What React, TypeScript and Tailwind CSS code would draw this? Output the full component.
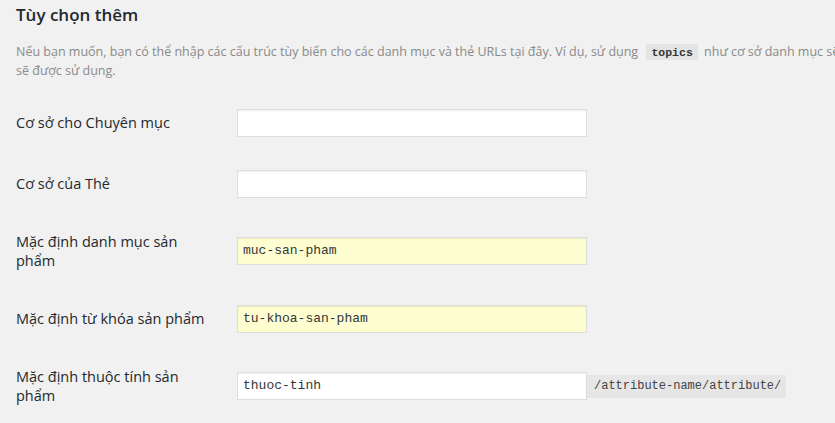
import React from "react";

const mono = { fontFamily: '"Liberation Mono", "DejaVu Sans Mono", monospace' };

function Row({
  label,
  value,
  tall,
  yellow,
  suffix,
}: {
  label: string;
  value?: string;
  tall?: boolean;
  yellow?: boolean;
  suffix?: string;
}) {
  return (
    <div className={`flex items-center ${tall ? "h-[74px]" : "h-[61px]"}`}>
      <div className="w-[195px] mr-[26px] text-[14.5px] leading-[19px] text-[#23282d]">{label}</div>
      <div
        className={`w-[350px] h-[28px] border border-[#dddddd] shadow-[inset_0_1px_2px_rgba(0,0,0,0.07)] flex items-center pl-[5px] text-[13px] text-[#32373c] ${
          yellow ? "bg-[#fefed0]" : "bg-white"
        }`}
        style={mono}
      >
        {value}
      </div>
      {suffix && (
        <div
          className="h-[23px] flex items-center bg-[#e6e6e6] pl-[7px] pr-[5px] text-[12px] text-[#444]"
          style={mono}
        >
          {suffix}
        </div>
      )}
    </div>
  );
}

export default function App() {
  return (
    <div
      className="w-[835px] h-[423px] overflow-hidden bg-[#f1f1f1] pl-4"
      style={{ fontFamily: '"Open Sans", "Noto Sans", sans-serif' }}
    >
      <h2 className="pt-[3px] text-[17px] leading-[23px] font-semibold text-[#23282d]">Tùy chọn thêm</h2>
      <div className="mt-[16px] text-[12.5px] text-[#8a8a8a]">
        <div className="h-[19px] leading-[19px] whitespace-nowrap">
          Nếu bạn muốn, bạn có thể nhập các cấu trúc tùy biến cho các danh mục và thẻ URLs tại đây. Ví dụ, sử dụng{" "}
          <code
            className="ml-[5px] mr-[3px] bg-[#e4e4e4] px-[5px] pt-[2px] pb-[1px] text-[11.5px] leading-[14px] font-bold text-[#333]"
            style={mono}
          >
            topics
          </code>{" "}
          như cơ sở danh mục sẽ
        </div>
        <div className="h-[19px] leading-[19px]">sẽ được sử dụng.</div>
      </div>
      <div className="mt-[12px]">
        <Row label="Cơ sở cho Chuyên mục" />
        <Row label="Cơ sở của Thẻ" />
        <Row label="Mặc định danh mục sản phẩm" value="muc-san-pham" tall yellow />
        <Row label="Mặc định từ khóa sản phẩm" value="tu-khoa-san-pham" yellow />
        <Row label="Mặc định thuộc tính sản phẩm" value="thuoc-tinh" tall suffix="/attribute-name/attribute/" />
      </div>
    </div>
  );
}
